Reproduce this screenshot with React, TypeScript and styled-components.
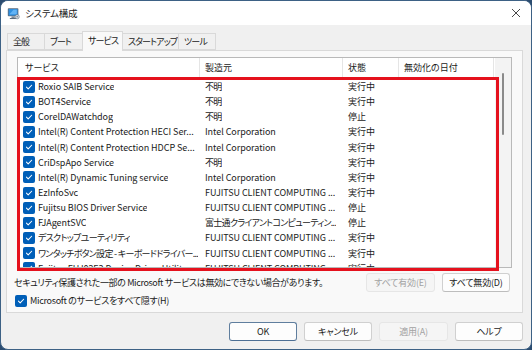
import React from 'react'
import styled, { createGlobalStyle } from 'styled-components'

const GlobalStyle = createGlobalStyle`
    html, body {
        margin: 0;
        padding: 0;
        background: #2b4c70;
    }
    body {
        font-family: 'Noto Sans CJK JP', 'Noto Sans', sans-serif;
        font-feature-settings: 'palt';
        color: #1a1a1a;
    }
`

const Window = styled.div`
    position: relative;
    width: 532px;
    height: 350px;
    box-sizing: border-box;
    border: 1px solid #3d6185;
    border-radius: 8px;
    overflow: hidden;
    display: flex;
    flex-direction: column;
    background: #f0f0f0;
`

const TitleBar = styled.div`
    height: 24px;
    flex: none;
    background: #ffffff;
    display: flex;
    align-items: center;
    padding: 0 0 0 6px;
`

const Title = styled.span`
    font-size: 9.5px;
    margin-left: 5px;
    letter-spacing: -0.2px;
    color: #1a1a1a;
`

const CloseBox = styled.div`
    margin-left: auto;
    width: 30px;
    height: 24px;
    display: flex;
    align-items: center;
    justify-content: center;
`

const Body = styled.div`
    flex: 1;
    display: flex;
    flex-direction: column;
    padding: 6px 8px 0 5px;
`

const TabStrip = styled.div`
    display: flex;
    align-items: flex-end;
    height: 19px;
    padding-left: 1px;
    position: relative;
    z-index: 1;
`

const Tab = styled.div<{ $w: number; $active?: boolean }>`
    width: ${(p) => p.$w}px;
    box-sizing: border-box;
    height: ${(p) => (p.$active ? 20 : 17)}px;
    margin-bottom: ${(p) => (p.$active ? -1 : 0)}px;
    padding-left: 5px;
    font-size: 9px;
    white-space: nowrap;
    letter-spacing: -0.9px;
    line-height: ${(p) => (p.$active ? 18 : 16)}px;
    background: ${(p) => (p.$active ? '#f9f9f9' : '#f0f0f0')};
    border: 1px solid #d9d9d9;
    border-bottom: ${(p) => (p.$active ? 'none' : '1px solid #d9d9d9')};
    margin-right: -1px;
    color: #1a1a1a;
`

const Panel = styled.div`
    height: 263px;
    box-sizing: border-box;
    background: #f9f9f9;
    border: 1px solid #d9d9d9;
    display: flex;
    flex-direction: column;
    padding: 6px 10px 0 10px;
`

const ListBox = styled.div`
    height: 211px;
    box-sizing: border-box;
    border: 1px solid #b9b9b9;
    background: #ffffff;
    display: flex;
    overflow: hidden;
`

const Table = styled.div`
    flex: 1;
    display: flex;
    flex-direction: column;
    overflow: hidden;
`

const HeaderRow = styled.div`
    display: grid;
    grid-template-columns: 182px 143px 56px 95px 1fr;
    height: 20px;
    margin-bottom: 1px;
    flex: none;
`

const HeaderCell = styled.div<{ $pad: number }>`
    font-size: 9px;
    line-height: 20px;
    padding-left: ${(p) => p.$pad}px;
    border-right: 1px solid #e5e5e5;
    color: #1a1a1a;
`

const Row = styled.div`
    display: grid;
    grid-template-columns: 182px 143px 56px 95px 1fr;
    height: 15.15px;
    flex: none;
    align-items: center;
`

const Cell = styled.div<{ $pad: number }>`
    font-size: 9px;
    padding-left: ${(p) => p.$pad}px;
    padding-right: 1px;
    white-space: nowrap;
    overflow: hidden;
    display: flex;
    align-items: center;
    gap: 3px;
`

const CellText = styled.span<{ $jp?: boolean }>`
    overflow: hidden;
    text-overflow: clip;
    letter-spacing: ${(p) => (p.$jp ? '-0.7px' : '-0.05px')};
`

const Box = styled.span<{ $size: number }>`
    flex: none;
    width: ${(p) => p.$size}px;
    height: ${(p) => p.$size}px;
    border-radius: 2px;
    background: #005fb8;
    display: inline-flex;
    align-items: center;
    justify-content: center;
`

const ScrollTrack = styled.div`
    width: 16px;
    flex: none;
    background: #f3f3f3;
    padding-top: 15px;
    box-sizing: border-box;
`

const Thumb = styled.div`
    width: 2px;
    height: 62px;
    margin-left: 7px;
    border-radius: 1px;
    background: #8a8a8a;
`

const InfoRow = styled.div`
    display: flex;
    align-items: center;
    margin-top: 5px;
    padding-right: 2px;
    height: 19px;
`

const InfoText = styled.span`
    font-size: 9px;
    letter-spacing: -0.38px;
    margin-left: -3px;
    white-space: nowrap;
`

const ButtonGroup = styled.div`
    margin-left: auto;
    display: flex;
    gap: 7px;
`

const Button = styled.div<{ $w: number; $disabled?: boolean; $default?: boolean }>`
    width: ${(p) => p.$w}px;
    height: 19px;
    box-sizing: border-box;
    border-radius: 3px;
    font-size: 9px;
    letter-spacing: -0.2px;
    display: flex;
    align-items: center;
    justify-content: center;
    background: ${(p) => (p.$disabled ? '#f5f5f5' : '#fdfdfd')};
    color: ${(p) => (p.$disabled ? '#a2a2a2' : '#1a1a1a')};
    border: 1px solid ${(p) => (p.$default ? '#5f7e9e' : p.$disabled ? '#e6e6e6' : '#d0d0d0')};
    border-bottom-color: ${(p) => (p.$default ? '#4d6f94' : p.$disabled ? '#e6e6e6' : '#bdbdbd')};
`

const HideRow = styled.div`
    display: flex;
    align-items: center;
    gap: 3px;
    margin-top: 2px;
    margin-left: -2px;
    font-size: 9px;
    letter-spacing: -0.3px;
`

const Footer = styled.div`
    display: flex;
    justify-content: flex-end;
    gap: 7px;
    padding: 9px 0 0 0;
`

const Highlight = styled.div`
    position: absolute;
    left: 16px;
    top: 76px;
    width: 482px;
    height: 194px;
    box-sizing: border-box;
    border: 3px solid #e5111d;
    pointer-events: none;
`

const Check = ({ size }: { size: number }) => (
    <Box $size={size}>
        <svg width={size - 4} height={size - 4} viewBox="0 0 10 10">
            <path d="M1.8 5.2 L4 7.3 L8.3 2.8" fill="none" stroke="#fff" strokeWidth="1.3" strokeLinecap="round" strokeLinejoin="round" />
        </svg>
    </Box>
)

const AppIcon = () => (
    <svg width="13" height="13" viewBox="0 0 16 16">
        <rect x="1" y="1.5" width="13" height="10" rx="1" fill="#5b6b7c" />
        <rect x="2" y="2.5" width="11" height="8" fill="#2f8fe0" />
        <path d="M3 9 L8 3.5 L12 3.5 L12 9 Z" fill="#62b3f5" />
        <rect x="5.5" y="11.5" width="4" height="2" fill="#7b8794" />
        <rect x="3.5" y="13.5" width="8" height="1.3" fill="#5b6b7c" />
        <circle cx="12.5" cy="12" r="2.6" fill="#d9dee4" stroke="#6b7785" strokeWidth="0.8" />
        <circle cx="12.5" cy="12" r="0.9" fill="#6b7785" />
    </svg>
)

const rows: [string, string, string][] = [
    ['Roxio SAIB Service', '不明', '実行中'],
    ['BOT4Service', '不明', '実行中'],
    ['CorelDAWatchdog', '不明', '停止'],
    ['Intel(R) Content Protection HECI Ser...', 'Intel Corporation', '実行中'],
    ['Intel(R) Content Protection HDCP Se...', 'Intel Corporation', '実行中'],
    ['CriDspApo Service', '不明', '実行中'],
    ['Intel(R) Dynamic Tuning service', 'Intel Corporation', '実行中'],
    ['EzInfoSvc', 'FUJITSU CLIENT COMPUTING ...', '実行中'],
    ['Fujitsu BIOS Driver Service', 'FUJITSU CLIENT COMPUTING ...', '停止'],
    ['FJAgentSVC', '富士通クライアントコンピューティン...', '停止'],
    ['デスクトップユーティリティ', 'FUJITSU CLIENT COMPUTING ...', '実行中'],
    ['ワンタッチボタン設定 - キーボードドライバー...', 'FUJITSU CLIENT COMPUTING ...', '実行中'],
    ['Fujitsu FUJ02E3 Device Driver Utility', 'FUJITSU CLIENT COMPUTING ...', '実行中'],
]

const isJp = (s: string) => /[\u3040-\u30ff\u4e00-\u9fff]/.test(s)

const tabs: [string, number][] = [
    ['全般', 38],
    ['ブート', 39],
    ['サービス', 41],
    ['スタートアップ', 57],
    ['ツール', 38],
]

const App = () => {
    return (
        <>
            <GlobalStyle />
            <Window>
                <TitleBar>
                    <AppIcon />
                    <Title>システム構成</Title>
                    <CloseBox>
                        <svg width="10" height="10" viewBox="0 0 10 10">
                            <path d="M1 1 L9 9 M9 1 L1 9" stroke="#333" strokeWidth="0.9" />
                        </svg>
                    </CloseBox>
                </TitleBar>
                <Body>
                    <TabStrip>
                        {tabs.map(([label, w]) => (
                            <Tab key={label} $w={w} $active={label === 'サービス'}>
                                {label}
                            </Tab>
                        ))}
                    </TabStrip>
                    <Panel>
                        <ListBox>
                            <Table>
                                <HeaderRow>
                                    <HeaderCell $pad={7}>サービス</HeaderCell>
                                    <HeaderCell $pad={5}>製造元</HeaderCell>
                                    <HeaderCell $pad={5}>状態</HeaderCell>
                                    <HeaderCell $pad={5}>無効化の日付</HeaderCell>
                                    <div />
                                </HeaderRow>
                                {rows.map(([name, maker, state]) => (
                                    <Row key={name}>
                                        <Cell $pad={5}>
                                            <Check size={12} />
                                            <CellText $jp={isJp(name)}>{name}</CellText>
                                        </Cell>
                                        <Cell $pad={5}>
                                            <CellText $jp={isJp(maker)}>{maker}</CellText>
                                        </Cell>
                                        <Cell $pad={5}>{state}</Cell>
                                        <Cell $pad={5} />
                                        <div />
                                    </Row>
                                ))}
                            </Table>
                            <ScrollTrack>
                                <Thumb />
                            </ScrollTrack>
                        </ListBox>
                        <InfoRow>
                            <InfoText>セキュリティ保護された一部の Microsoft サービスは無効にできない場合があります。</InfoText>
                            <ButtonGroup>
                                <Button $w={69} $disabled>
                                    すべて有効(E)
                                </Button>
                                <Button $w={68}>すべて無効(D)</Button>
                            </ButtonGroup>
                        </InfoRow>
                        <HideRow>
                            <Check size={12} />
                            <span>Microsoft のサービスをすべて隠す(H)</span>
                        </HideRow>
                    </Panel>
                    <Footer>
                        <Button $w={68} $default>
                            OK
                        </Button>
                        <Button $w={68}>キャンセル</Button>
                        <Button $w={69} $disabled>
                            適用(A)
                        </Button>
                        <Button $w={68}>ヘルプ</Button>
                    </Footer>
                </Body>
                <Highlight />
            </Window>
        </>
    )
}

export default App
